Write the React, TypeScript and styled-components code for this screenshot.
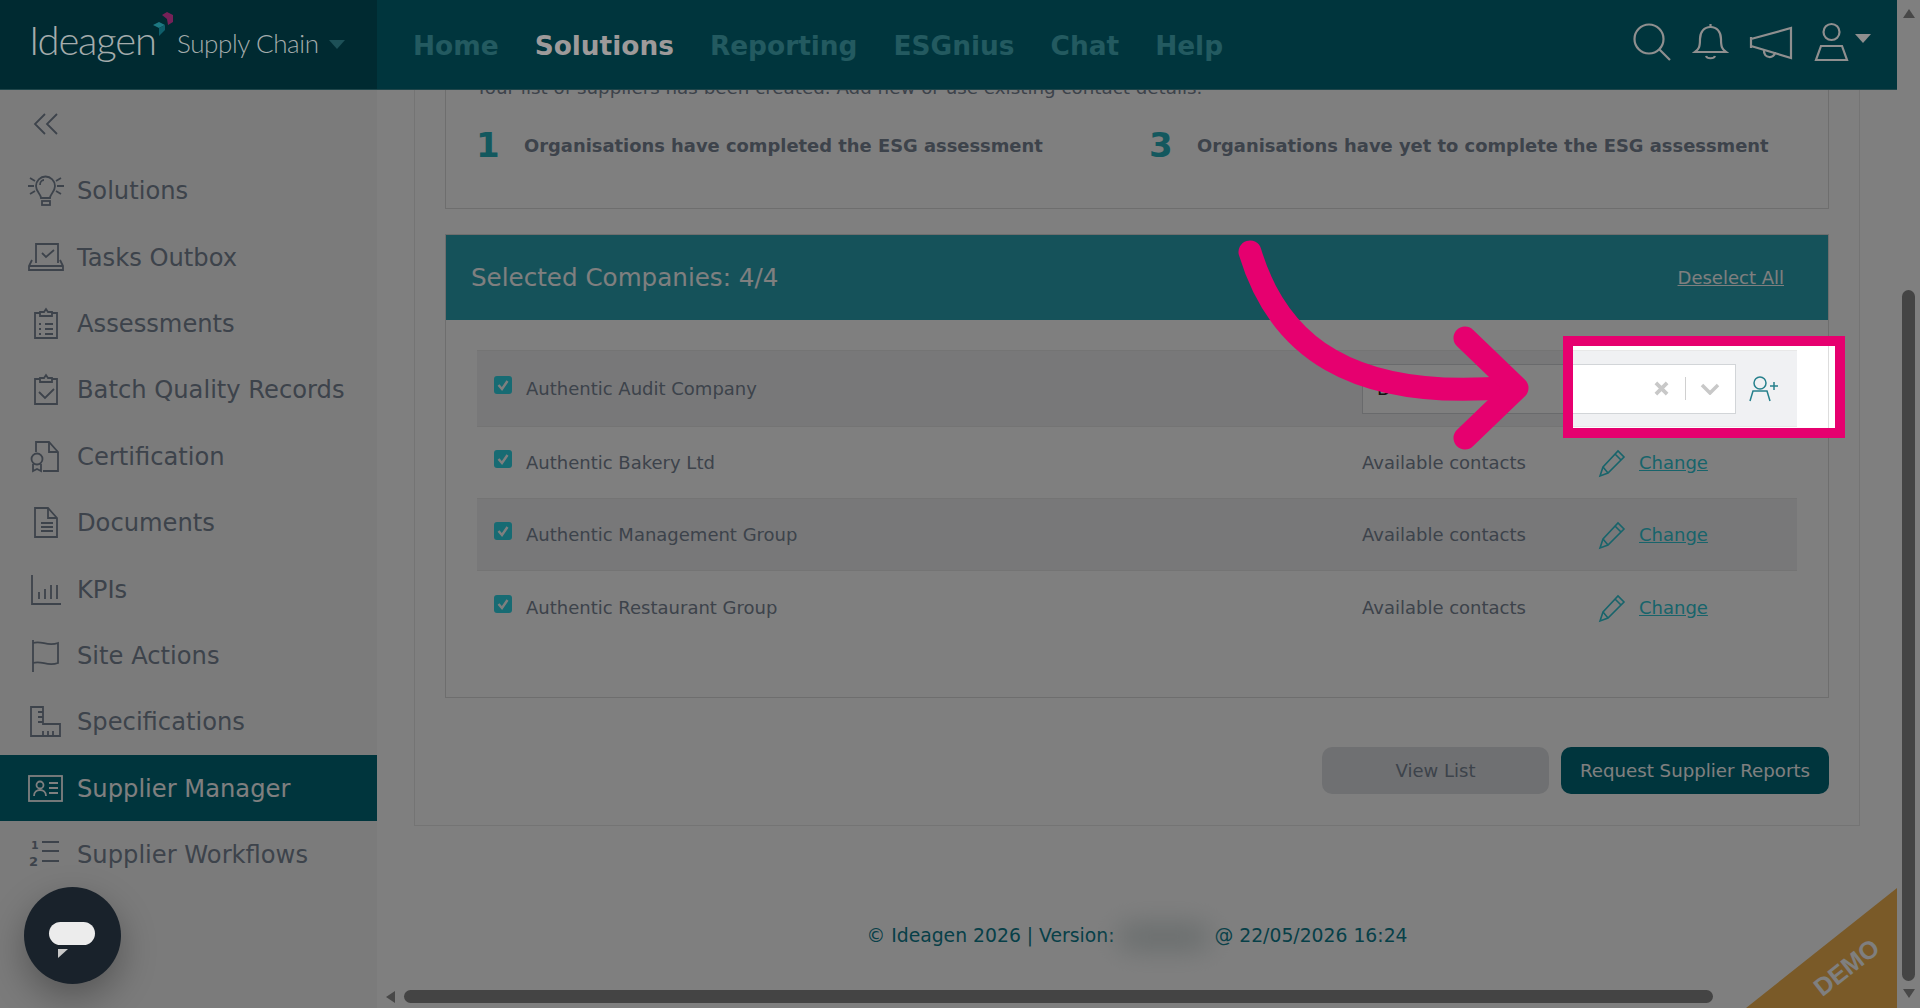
import React from "react";
import styled, { createGlobalStyle } from "styled-components";

const GlobalStyle = createGlobalStyle`
  html, body {
    margin: 0;
    padding: 0;
    background: #fff;
    font-family: "DejaVu Sans", Verdana, sans-serif;
  }
  * {
    box-sizing: border-box;
  }
`;

const SIDE_STROKE = "#7a8696";

const Stroke = styled.svg.attrs({ fill: "none", xmlns: "http://www.w3.org/2000/svg" })<{ $size?: number }>`
  display: block;
  flex: none;
  overflow: visible;
  stroke: currentColor;
  stroke-width: 1.8;
  width: ${({ $size }) => $size ?? 36}px;
  height: 36px;
`;

const sideIcons: Record<string, React.ReactNode> = {
  Solutions: (
    <Stroke viewBox="0 0 36 36">
      <path d="M13 25c0-4-5-6-5-12a9.500 9.500 0 0 1 19 0c0 6-5 8-5 12z" />
      <path d="M12 12c0-3 2-5 4-5" />
      <rect x="14" y="28" width="8" height="4" />
      <path d="M0 13h6M2 5l5 3M2 21l5-3M29 13h7M28 8l5-3M28 18l5 3" />
    </Stroke>
  ),
  "Tasks Outbox": (
    <Stroke viewBox="0 0 36 36">
      <path d="M8 23V4h22v19" />
      <path d="M4 20 1 26v4h34v-4l-3-6M1 26h34" />
      <path d="m14 13 4 4 8-7" />
    </Stroke>
  ),
  Assessments: (
    <Stroke viewBox="0 0 36 36">
      <path d="M12 7H7v25h22V7h-5" />
      <path d="M12 10V6h4l2-3 2 3h4v4z" />
      <path d="M17 18h8M17 23h8M17 28h8M11 18h2M11 23h2M11 28h2" />
    </Stroke>
  ),
  "Batch Quality Records": (
    <Stroke viewBox="0 0 36 36">
      <path d="M12 7H7v25h22V7h-5" />
      <path d="M12 10V6h4l2-3 2 3h4v4z" />
      <path d="m11 20 6 6 9-9" />
    </Stroke>
  ),
  Certification: (
    <Stroke viewBox="0 0 36 36">
      <path d="M8 13V3h13l9 10v19H15" />
      <path d="M21 3v10h9" />
      <circle cx="9" cy="20" r="5.500" />
      <path d="M5 25v7l4-2 4 2v-7" />
    </Stroke>
  ),
  Documents: (
    <Stroke viewBox="0 0 36 36">
      <path d="M7 3v29h22V13L20 3z" />
      <path d="M20 3v10h9M13 18h12M13 22h12M13 26h12" />
    </Stroke>
  ),
  KPIs: (
    <Stroke viewBox="0 0 36 36">
      <path d="M4 3v29h29" />
      <path d="M11 20v7M17 17v10M23 13v14M29 13v14" />
    </Stroke>
  ),
  "Site Actions": (
    <Stroke viewBox="0 0 36 36">
      <path d="M5 2v32" />
      <path d="M5 5c9-3 14 4 25 0v20c-11 4-16-3-25 0" />
    </Stroke>
  ),
  Specifications: (
    <Stroke viewBox="0 0 36 36">
      <path d="M3 3h12v17h17v12H3z" />
      <path d="M10 8h5M10 13h5M10 18h5M20 27v5M25 27v5M15 27v5" />
    </Stroke>
  ),
  "Supplier Manager": (
    <Stroke viewBox="0 0 36 36">
      <rect x="1" y="5" width="33" height="25" />
      <circle cx="12" cy="14" r="3.500" />
      <path d="M6 25c0-8 12-8 12 0M21 12h9M21 17h9M21 22h9" />
    </Stroke>
  ),
  "Supplier Workflows": (
    <Stroke viewBox="0 0 36 36">
      <path d="M14 5h17M14 14h17M14 24h17" />
      <text x="3" y="12" fontSize="11" fontWeight="700" fill="currentColor" stroke="none">1</text>
      <text x="1" y="29" fontSize="13" fontWeight="700" fill="currentColor" stroke="none">2</text>
    </Stroke>
  ),
};

const sideItems = [
  "Solutions",
  "Tasks Outbox",
  "Assessments",
  "Batch Quality Records",
  "Certification",
  "Documents",
  "KPIs",
  "Site Actions",
  "Specifications",
  "Supplier Manager",
  "Supplier Workflows",
];

const navItems = ["Home", "Solutions", "Reporting", "ESGnius", "Chat", "Help"];

const companies = [
  { name: "Authentic Audit Company", height: 77, editing: true },
  { name: "Authentic Bakery Ltd", height: 71, editing: false },
  { name: "Authentic Management Group", height: 73, editing: false },
  { name: "Authentic Restaurant Group", height: 73, editing: false },
];

const PencilIcon = () => (
  <Stroke viewBox="0 0 26 36" $size={26} style={{ strokeWidth: 1.6 }}>
    <path d="M1 31l3-9L19 6l6 6L9 28z" />
    <path d="M4 22l5 6M16 9l6 6" />
  </Stroke>
);

const App = () => {
  return (
    <Screen>
      <GlobalStyle />
      <Viewport>
        <Header>
          <Brand>
            <LogoWord>
              Ideagen
              <LogoMark viewBox="0 0 22 28">
                <path d="M11 5l5-3 6 3v7l-5 3-1-6z" fill="#d81a78" />
                <path d="M2 15l6-3 6 3-6 3z" fill="#35b8c4" />
                <path d="M8 18l6-3v5l-6 6z" fill="#1d8a99" />
              </LogoMark>
            </LogoWord>
            <Product>Supply Chain</Product>
            <Caret $w={17} $h={9} $color="#3aa0ae" />
          </Brand>
          <Nav>
            {navItems.map((item) => (
              <NavLink key={item} $active={item === "Solutions"}>
                {item}
              </NavLink>
            ))}
          </Nav>
          <HeaderTools>
            <Stroke viewBox="0 0 38 38" $size={38} style={{ height: 38, strokeWidth: 2.2 }}>
              <circle cx="16" cy="16" r="14.500" />
              <path d="m26 26 11 11" />
            </Stroke>
            <Stroke viewBox="0 0 33 38" $size={33} style={{ height: 38, strokeWidth: 2.2 }}>
              <path d="M1 29c4-3 5-5 5-13C6 9 10 4 16.500 4S27 9 27 16c0 8 1 10 5 13z" />
              <path d="M16.500 4V1M12 33c1 3 8 3 9 0" />
            </Stroke>
            <Stroke viewBox="0 0 42 34" $size={42} style={{ height: 34, strokeWidth: 2.2 }}>
              <path d="M1 12v11M1 14 41 3v30L1 21" />
              <path d="M14 25c-1 9 11 9 11 2" />
            </Stroke>
            <Stroke viewBox="0 0 33 38" $size={33} style={{ height: 38, strokeWidth: 2.2 }}>
              <circle cx="16.500" cy="9" r="8" />
              <path d="M6 23h21l5 14H1z" />
            </Stroke>
            <Caret $w={17} $h={9} $color="#8f8f8f" />
          </HeaderTools>
        </Header>
        <Body>
          <Sidebar>
            <Collapse>
              <Stroke viewBox="0 0 24 24" $size={24} style={{ height: 24 }}>
                <path d="M11 2 1 12l10 10M23 2 13 12l10 10" />
              </Stroke>
            </Collapse>
            {sideItems.map((item) => (
              <SideItem key={item} $active={item === "Supplier Manager"}>
                {sideIcons[item]}
                {item}
              </SideItem>
            ))}
          </Sidebar>
          <Main>
            <Scroller>
              <Panel>
                <SummaryCard>
                  <Intro>Your list of suppliers has been created. Add new or use existing contact details.</Intro>
                  <Stats>
                    <Stat>
                      <StatNumber>1</StatNumber>
                      <StatLabel>Organisations have completed the ESG assessment</StatLabel>
                    </Stat>
                    <Stat>
                      <StatNumber>3</StatNumber>
                      <StatLabel>Organisations have yet to complete the ESG assessment</StatLabel>
                    </Stat>
                  </Stats>
                </SummaryCard>
                <SelectedCard>
                  <CardHead>
                    <CardTitle>Selected Companies: 4/4</CardTitle>
                    <Deselect>Deselect All</Deselect>
                  </CardHead>
                  <CardBody>
                    {companies.map((company, idx) => (
                      <CompanyRow key={company.name} $height={company.height} $striped={idx % 2 === 0}>
                        <CompanyName>
                          <Check>
                            <svg viewBox="0 0 18 18" width="18" height="18" fill="none" stroke="#fff" strokeWidth="2.4">
                              <path d="m4.500 9 3.500 4 5.500-8" />
                            </svg>
                          </Check>
                          {company.name}
                        </CompanyName>
                        {company.editing ? (
                          <ContactCell>
                            <SelectBox>
                              <SelectValue>D</SelectValue>
                              <svg viewBox="0 0 16 16" width="15" height="15" fill="none" stroke="#c8c8c8" strokeWidth="4">
                                <path d="m2 2 12 12M14 2 2 14" />
                              </svg>
                              <SelectDivider />
                              <svg viewBox="0 0 20 12" width="20" height="12" fill="none" stroke="#c8c8c8" strokeWidth="3.500">
                                <path d="m2 2 8 8 8-8" />
                              </svg>
                            </SelectBox>
                            <AddContact>
                              <svg viewBox="0 0 30 30" width="30" height="30" fill="none" stroke="currentColor" strokeWidth="1.5">
                                <circle cx="12" cy="8" r="6" />
                                <path d="M2 26 5 16h14l3 10M22 11h8M26 7v8" />
                              </svg>
                            </AddContact>
                          </ContactCell>
                        ) : (
                          <ContactCell>
                            <ContactLabel>Available contacts</ContactLabel>
                            <ChangeLink>
                              <PencilIcon />
                              <span>Change</span>
                            </ChangeLink>
                          </ContactCell>
                        )}
                      </CompanyRow>
                    ))}
                  </CardBody>
                </SelectedCard>
                <Actions>
                  <GhostButton>View List</GhostButton>
                  <PrimaryButton>Request Supplier Reports</PrimaryButton>
                </Actions>
              </Panel>
              <Footer>
                © Ideagen 2026 | Version: <BlurredVersion /> @ 22/05/2026 16:24
              </Footer>
            </Scroller>
            <HScroll>
              <ArrowLeft />
              <HThumb />
            </HScroll>
          </Main>
        </Body>
        <DemoCorner>
          <DemoText>DEMO</DemoText>
        </DemoCorner>
      </Viewport>
      <VScroll>
        <ArrowUp />
        <VThumb />
        <ArrowDown />
      </VScroll>

      <Spotlight />
      <GuideArrow viewBox="0 0 1920 1008" fill="none">
        <path
          d="M1250 252C1278 345 1350 402 1512 387"
          stroke="#e6006f"
          strokeWidth="23"
          strokeLinecap="round"
        />
        <path
          d="M1465 338 1517 388 1465 438"
          stroke="#e6006f"
          strokeWidth="23"
          strokeLinecap="round"
          strokeLinejoin="round"
        />
      </GuideArrow>
      <ChatBubble>
        <ChatPill />
        <ChatTail />
      </ChatBubble>
    </Screen>
  );
};

const Screen = styled.div`
  position: relative;
  display: flex;
  width: 1920px;
  height: 1008px;
  overflow: hidden;
  background: #fff;
  color: #7a8696;
`;

const Viewport = styled.div`
  position: relative;
  flex: 1;
  display: flex;
  flex-direction: column;
  min-width: 0;
`;

const Header = styled.header`
  flex: none;
  height: 90px;
  display: flex;
  align-items: center;
  background: #006a7a;
  border-bottom: 1px solid #3f8a94;
`;

const Brand = styled.div`
  width: 377px;
  height: 100%;
  display: flex;
  align-items: center;
  padding-left: 29px;
  background: #005462;
`;

const LogoWord = styled.div`
  position: relative;
  z-index: 20;
  font-family: "Lato", sans-serif;
  font-weight: 300;
  font-size: 40px;
  letter-spacing: -1.2px;
  color: #a4acac;
  width: 148px;
  margin-top: -10px;
`;

const LogoMark = styled.svg`
  position: absolute;
  left: 122px;
  top: -6px;
  width: 22px;
  height: 28px;
  opacity: 0.55;
`;

const Product = styled.div`
  position: relative;
  z-index: 20;
  font-family: "Lato", sans-serif;
  font-size: 26px;
  font-weight: 300;
  letter-spacing: -0.4px;
  color: #a4acac;
  margin-top: -3px;
`;

const Caret = styled.span<{ $w: number; $h: number; $color: string }>`
  display: block;
  flex: none;
  margin-left: 10px;
  width: 0;
  height: 0;
  border-left: ${({ $w }) => $w / 2}px solid transparent;
  border-right: ${({ $w }) => $w / 2}px solid transparent;
  border-top: ${({ $h }) => $h}px solid ${({ $color }) => $color};
`;

const Nav = styled.nav`
  display: flex;
  gap: 36px;
  padding: 2px 0 0 36px;
`;

const NavLink = styled.a<{ $active?: boolean }>`
  position: relative;
  z-index: ${({ $active }) => ($active ? 20 : "auto")};
  font-size: 26.4px;
  font-weight: 700;
  color: ${({ $active }) => ($active ? "#9e9a9a" : "#46b4c0")};
`;

const HeaderTools = styled.div`
  position: relative;
  z-index: 20;
  margin-left: auto;
  display: flex;
  align-items: center;
  gap: 23px;
  padding-right: 26px;
  color: #8f8f8f;
  margin-top: -6px;

  > span {
    margin-left: -16px;
    margin-top: -6px;
  }
`;

const Body = styled.div`
  flex: 1;
  min-height: 0;
  display: flex;
`;

const Sidebar = styled.aside`
  flex: none;
  width: 377px;
  background: #f7f7f7;
`;

const Collapse = styled.div`
  height: 67px;
  display: flex;
  align-items: center;
  padding-left: 34px;
  color: ${SIDE_STROKE};
`;

const SideItem = styled.div<{ $active?: boolean }>`
  height: 66.4px;
  display: flex;
  align-items: center;
  gap: 13px;
  padding: 2px 0 0 28px;
  font-size: 24.2px;
  background: ${({ $active }) => ($active ? "#006a7a" : "transparent")};
  color: ${({ $active }) => ($active ? "#fff" : SIDE_STROKE)};
`;

const Main = styled.main`
  flex: 1;
  min-width: 0;
  display: flex;
  flex-direction: column;
`;

const Scroller = styled.div`
  flex: 1;
  min-height: 0;
  overflow: hidden;
`;

const Panel = styled.section`
  margin: -40px 37px 0 37px;
  padding: 0 30px 31px 30px;
  border: 1px solid #e8e8e8;
`;

const SummaryCard = styled.div`
  height: 158px;
  padding: 24px 30px 0;
  border: 1px solid #ddd;
  font-size: 18px;
`;

const Intro = styled.p`
  margin: 0;
  line-height: 24px;
  font-size: 18.3px;
  color: #7a8696;
`;

const Stats = styled.div`
  display: grid;
  grid-template-columns: 673px 1fr;
  margin-top: 25px;
`;

const Stat = styled.div`
  display: flex;
  align-items: center;
  height: 40px;
`;

const StatNumber = styled.span`
  flex: none;
  width: 48px;
  font-size: 34px;
  font-weight: 700;
  color: #26b0bc;
`;

const StatLabel = styled.span`
  font-size: 17.9px;
  font-weight: 700;
  color: #7a8696;
`;

const SelectedCard = styled.div`
  margin-top: 25px;
  border: 1px solid #ddd;
`;

const CardHead = styled.div`
  height: 85px;
  display: flex;
  align-items: center;
  justify-content: space-between;
  padding: 0 44px 0 25px;
  background: #2aa4b4;
  color: #fff;
`;

const CardTitle = styled.div`
  font-size: 24.6px;
`;

const Deselect = styled.a`
  font-size: 18px;
  text-decoration: underline;
`;

const CardBody = styled.div`
  padding: 30px 31px 53px 31px;
`;

const CompanyRow = styled.div<{ $height: number; $striped: boolean }>`
  height: ${({ $height }) => $height}px;
  display: grid;
  grid-template-columns: 885px 1fr;
  align-items: center;
  background: ${({ $striped }) => ($striped ? "#f0f1f3" : "transparent")};
  border-top: 1px solid ${({ $striped }) => ($striped ? "#e8e8e8" : "transparent")};
  border-bottom: 1px solid ${({ $striped }) => ($striped ? "#e8e8e8" : "transparent")};
`;

const CompanyName = styled.div`
  display: flex;
  align-items: center;
  gap: 14px;
  padding-left: 17px;
  font-size: 18px;
  color: #7a8696;
`;

const Check = styled.span`
  flex: none;
  width: 18px;
  height: 18px;
  margin-bottom: 8px;
  border-radius: 3px;
  background: #2ed6e6;

  svg {
    display: block;
  }
`;

const ContactCell = styled.div`
  display: flex;
  align-items: center;
  font-size: 18px;
  color: #7a8696;
`;

const SelectBox = styled.div`
  width: 374px;
  height: 50px;
  display: flex;
  align-items: center;
  padding: 0 15px 0 14px;
  background: #fff;
  border: 1px solid #d2d5d8;
  color: #222;
`;

const SelectValue = styled.span`
  flex: 1;
`;

const SelectDivider = styled.span`
  width: 1px;
  height: 23px;
  margin: 0 14px 0 16px;
  background: #d0d0d0;
`;

const AddContact = styled.span`
  margin: 3px 0 0 12px;
  color: #26808c;
  line-height: 0;
`;

const ContactLabel = styled.span`
  width: 237px;
`;

const ChangeLink = styled.a`
  display: flex;
  align-items: center;
  gap: 14px;
  color: #30c8d6;

  span {
    text-decoration: underline;
  }
`;

const Actions = styled.div`
  display: flex;
  justify-content: flex-end;
  gap: 12px;
  margin-top: 49px;
`;

const GhostButton = styled.button`
  width: 227px;
  height: 47px;
  border: 0;
  border-radius: 10px;
  background: #dfe1e4;
  color: #7a8696;
  font: 18px "DejaVu Sans", sans-serif;
`;

const PrimaryButton = styled.button`
  width: 268px;
  height: 47px;
  border: 0;
  border-radius: 10px;
  background: #006a7a;
  color: #fff;
  font: 18.2px "DejaVu Sans", sans-serif;
`;

const Footer = styled.footer`
  margin-top: 98px;
  text-align: center;
  font-size: 18.8px;
  line-height: 24px;
  color: #0e8090;
`;

const BlurredVersion = styled.span`
  display: inline-block;
  width: 88px;
  height: 22px;
  vertical-align: middle;
  background: #c8d2d2;
  filter: blur(14px);
`;

const HScroll = styled.div`
  flex: none;
  height: 21px;
  display: flex;
  align-items: flex-start;
  padding: 3px 0 0 9px;
`;

const ArrowLeft = styled.span`
  width: 0;
  height: 0;
  margin-top: 1px;
  border-top: 6px solid transparent;
  border-bottom: 6px solid transparent;
  border-right: 9px solid #909090;
`;

const HThumb = styled.span`
  width: 1309px;
  height: 13px;
  margin-left: 9px;
  border-radius: 7px;
  background: #888;
`;

const VScroll = styled.div`
  flex: none;
  width: 23px;
  display: flex;
  flex-direction: column;
  align-items: center;
  padding: 9px 0 8px;
`;

const ArrowUp = styled.span`
  width: 0;
  height: 0;
  border-left: 6px solid transparent;
  border-right: 6px solid transparent;
  border-bottom: 9px solid #909090;
`;

const VThumb = styled.span`
  width: 13px;
  height: 691px;
  margin-top: 272px;
  border-radius: 7px;
  background: #888;
`;

const ArrowDown = styled.span`
  width: 0;
  height: 0;
  margin-top: 8px;
  border-left: 6px solid transparent;
  border-right: 6px solid transparent;
  border-top: 9px solid #909090;
`;

const DemoCorner = styled.div`
  position: absolute;
  right: 0;
  bottom: 0;
  width: 151px;
  height: 120px;
  background: #f4b450;
  clip-path: polygon(100% 0, 100% 100%, 0 100%);
`;

const DemoText = styled.span`
  position: absolute;
  left: 63px;
  top: 65px;
  transform: rotate(-38deg);
  font: 700 25px "Liberation Sans", Arial, sans-serif;
  color: #fff;
`;

const Spotlight = styled.div`
  position: absolute;
  left: 1563px;
  top: 336px;
  width: 282px;
  height: 102px;
  z-index: 10;
  border: 10px solid #e6006f;
  box-shadow: 0 0 0 2400px rgba(0, 0, 0, 0.5);
`;

const GuideArrow = styled.svg`
  position: absolute;
  inset: 0;
  z-index: 20;
  width: 1920px;
  height: 1008px;
  pointer-events: none;
`;

const ChatBubble = styled.div`
  position: absolute;
  left: 24px;
  top: 887px;
  z-index: 30;
  width: 97px;
  height: 97px;
  border-radius: 50%;
  background: #19222b;
  box-shadow: 0 14px 36px rgba(0, 0, 0, 0.3);
`;

const ChatPill = styled.span`
  position: absolute;
  left: 25px;
  top: 35px;
  width: 46px;
  height: 23px;
  border-radius: 12px;
  background: #ececec;
`;

const ChatTail = styled.span`
  position: absolute;
  left: 34px;
  top: 62px;
  width: 10px;
  height: 9px;
  background: #c8c8c8;
  clip-path: polygon(0 0, 100% 0, 0 100%);
`;

export default App;
